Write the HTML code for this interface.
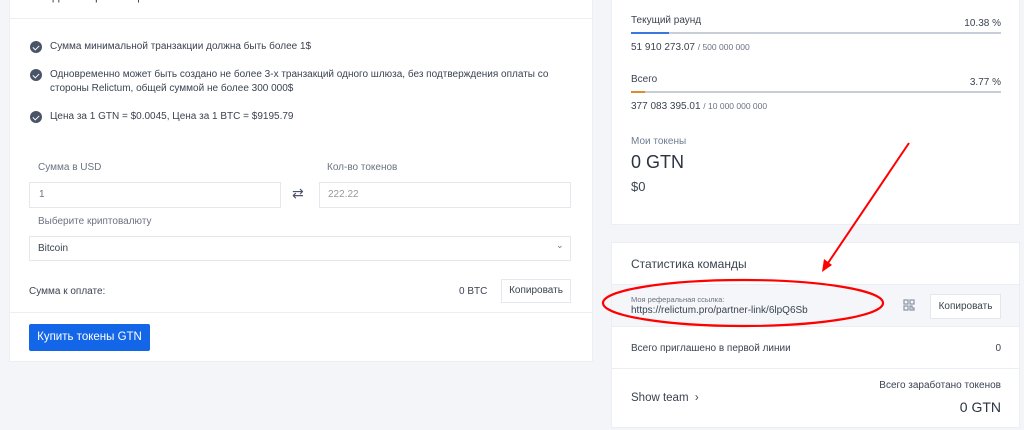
<!DOCTYPE html>
<html><head><meta charset="utf-8"><style>
*{margin:0;padding:0;box-sizing:border-box}
body{width:1024px;height:430px;overflow:hidden;background:#f3f5f9;font-family:"Liberation Sans","DejaVu Sans",sans-serif;color:#3b4350;position:relative;font-size:10px}
.a{position:absolute;white-space:nowrap}
.card{position:absolute;background:#fff;border:1px solid #eceef2}
.chk{position:absolute;width:12px;height:12px;border-radius:50%;background:#4a5468}
.chk:after{content:"";position:absolute;left:3.5px;top:2.5px;width:3px;height:5px;border:solid #fff;border-width:0 1.6px 1.6px 0;transform:rotate(45deg)}
.inp{position:absolute;border:1px solid #e4e7ec;background:#fff}
.btn{position:absolute;border:1px solid #e4e7ec;background:#fff;text-align:center;color:#3b4350}
.muted{color:#6b7280}
</style></head><body>
<div class="card" style="left:9px;top:-2px;width:584px;height:364px"></div>
<div class="a" style="left:9px;top:18px;width:584px;height:1px;background:#eceef2"></div>
<div class="a" style="left:32px;top:-11px;font-size:12px">Создание транзакции</div>
<div class="chk" style="left:30px;top:41px"></div><div class="a" style="left:50px;top:41px">Сумма минимальной транзакции должна быть более 1$</div>
<div class="chk" style="left:30px;top:69px"></div><div class="a" style="left:50px;top:68px;line-height:14px">Одновременно может быть создано не более 3-х транзакций одного шлюза, без подтверждения оплаты со<br>стороны Relictum, общей суммой не более 300 000$</div>
<div class="chk" style="left:30px;top:111px"></div><div class="a" style="left:50px;top:111px">Цена за 1 GTN = $0.0045, Цена за 1 BTC = $9195.79</div>
<div class="a muted" style="left:38px;top:162px">Сумма в USD</div>
<div class="a muted" style="left:327px;top:162px">Кол-во токенов</div>
<div class="inp" style="left:29px;top:182px;width:252px;height:26px"></div><div class="a muted" style="left:39px;top:189px">1</div>
<div class="a" style="left:292px;top:185px;font-size:14px;color:#4a5468">⇄</div>
<div class="inp" style="left:319px;top:182px;width:252px;height:26px"></div><div class="a" style="left:328px;top:189px;color:#999">222.22</div>
<div class="a muted" style="left:38px;top:216px">Выберите криптовалюту</div>
<div class="inp" style="left:29px;top:236px;width:542px;height:25px"></div><div class="a" style="left:38px;top:243px">Bitcoin</div>
<div class="a muted" style="left:556px;top:240px;font-size:9px">⌄</div>
<div class="a" style="left:29px;top:286px">Сумма к оплате:</div>
<div class="a" style="left:459px;top:286px">0 BTC</div>
<div class="btn" style="left:501px;top:279px;width:70px;height:24px;line-height:22px">Копировать</div>
<div class="a" style="left:9px;top:312px;width:584px;height:1px;background:#eceef2"></div>
<div class="a" style="left:29px;top:324px;width:121px;height:27px;background:#1366e8;border-radius:2px;color:#fff;font-size:11.5px;text-align:center;line-height:27px">Купить токены GTN</div>

<div class="card" style="left:611px;top:-2px;width:409px;height:227px"></div>
<div class="a" style="left:631px;top:15px">Текущий раунд</div>
<div class="a" style="right:23px;top:18px">10.38 %</div>
<div class="a" style="left:631px;top:32px;width:370px;height:2px;background:#c8ced8"></div>
<div class="a" style="left:631px;top:32px;width:38px;height:2px;background:#3a78e0"></div>
<div class="a" style="left:631px;top:42px">51 910 273.07 <span class="muted" style="font-size:8.5px">/ 500 000 000</span></div>
<div class="a" style="left:631px;top:74px">Всего</div>
<div class="a" style="right:23px;top:77px">3.77 %</div>
<div class="a" style="left:631px;top:91px;width:370px;height:2px;background:#c8ced8"></div>
<div class="a" style="left:631px;top:91px;width:14px;height:2px;background:#e08a30"></div>
<div class="a" style="left:631px;top:101px">377 083 395.01 <span class="muted" style="font-size:8.5px">/ 10 000 000 000</span></div>
<div class="a muted" style="left:631px;top:136px;color:#6e7d91">Мои токены</div>
<div class="a" style="left:631px;top:152px;font-size:18px;color:#2c3340">0 GTN</div>
<div class="a" style="left:631px;top:179px;font-size:13px">$0</div>

<div class="card" style="left:611px;top:242px;width:409px;height:186px"></div>
<div class="a" style="left:631px;top:257px;font-size:12px">Статистика команды</div>
<div class="a" style="left:612px;top:284px;width:407px;height:43px;background:#f4f6f9;border-top:1px solid #eceef2;border-bottom:1px solid #eceef2"></div>
<div class="a muted" style="left:631px;top:295px;font-size:7.5px">Моя реферальная ссылка:</div>
<div class="a" style="left:631px;top:305px">https://relictum.pro/partner-link/6lpQ6Sb</div>
<svg class="a" style="left:903px;top:299px" width="12" height="12" viewBox="0 0 12 12" fill="none" stroke="#8a94a6" stroke-width="1.2"><rect x="1" y="1" width="4" height="4"/><rect x="7" y="1" width="4" height="4"/><rect x="1" y="7" width="4" height="4"/><path d="M7 7h2v2h2v2H7z"/></svg>
<div class="btn" style="left:930px;top:294px;width:71px;height:25px;line-height:23px">Копировать</div>
<div class="a" style="left:631px;top:343px">Всего приглашено в первой линии</div>
<div class="a" style="right:23px;top:343px">0</div>
<div class="a" style="left:612px;top:368px;width:407px;height:1px;background:#eceef2"></div>
<div class="a" style="left:631px;top:392px;font-size:11.5px">Show team &nbsp;›</div>
<div class="a" style="right:23px;top:380px">Всего заработано токенов</div>
<div class="a" style="right:23px;top:399px;font-size:14px;color:#2c3340">0 GTN</div>

<svg class="a" style="left:0;top:0" width="1024" height="430">
<line x1="909" y1="143" x2="826" y2="266" stroke="#f00" stroke-width="2"/>
<path d="M822 272 L824 259 L832 265 Z" fill="#f00"/>
<ellipse cx="743" cy="303" rx="140" ry="23" fill="none" stroke="#f00" stroke-width="2.2"/>
</svg>
</body></html>
